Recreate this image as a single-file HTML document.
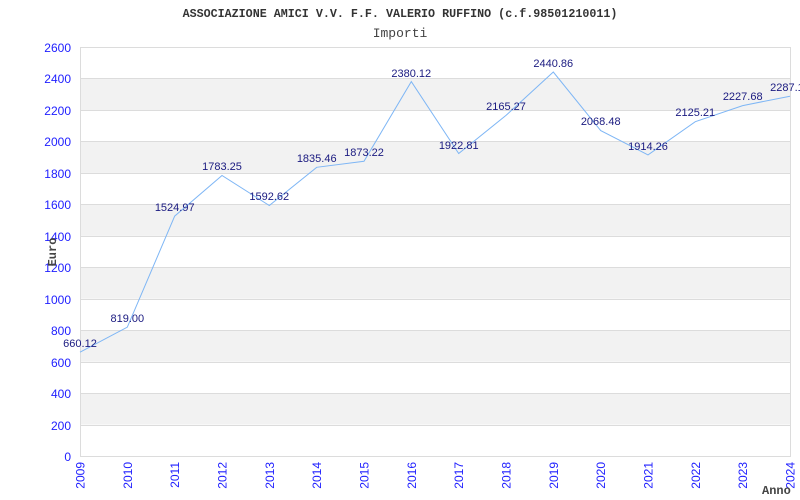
<!DOCTYPE html>
<html><head><meta charset="utf-8"><style>
html,body{margin:0;padding:0;background:#fff;}
svg{display:block}
</style></head><body>
<svg width="800" height="500" viewBox="0 0 800 500" xmlns="http://www.w3.org/2000/svg">
<rect width="800" height="500" fill="#fff"/>
<text x="400" y="17" text-anchor="middle" font-family="Liberation Mono, monospace" font-size="11.7" font-weight="bold" fill="#333">ASSOCIAZIONE AMICI V.V. F.F. VALERIO RUFFINO (c.f.98501210011)</text>
<text x="400" y="37" text-anchor="middle" font-family="Liberation Mono, monospace" font-size="13" fill="#444">Importi</text>
<g fill="#f2f2f2">
<rect x="80.5" y="393.1" width="710" height="31.5"/>
<rect x="80.5" y="330.2" width="710" height="31.5"/>
<rect x="80.5" y="267.2" width="710" height="31.5"/>
<rect x="80.5" y="204.3" width="710" height="31.5"/>
<rect x="80.5" y="141.4" width="710" height="31.5"/>
<rect x="80.5" y="78.5" width="710" height="31.5"/>
</g>
<g stroke="#dcdcdc" stroke-width="1">
<line x1="80" y1="47.5" x2="790" y2="47.5"/>
<line x1="80" y1="78.5" x2="790" y2="78.5"/>
<line x1="80" y1="110.5" x2="790" y2="110.5"/>
<line x1="80" y1="141.5" x2="790" y2="141.5"/>
<line x1="80" y1="173.5" x2="790" y2="173.5"/>
<line x1="80" y1="204.5" x2="790" y2="204.5"/>
<line x1="80" y1="236.5" x2="790" y2="236.5"/>
<line x1="80" y1="267.5" x2="790" y2="267.5"/>
<line x1="80" y1="299.5" x2="790" y2="299.5"/>
<line x1="80" y1="330.5" x2="790" y2="330.5"/>
<line x1="80" y1="362.5" x2="790" y2="362.5"/>
<line x1="80" y1="393.5" x2="790" y2="393.5"/>
<line x1="80" y1="425.5" x2="790" y2="425.5"/>
<line x1="80" y1="456.5" x2="790" y2="456.5"/>
<line x1="80.5" y1="47" x2="80.5" y2="457"/>
<line x1="790.5" y1="47" x2="790.5" y2="457"/>
</g>
<g font-family="Liberation Sans, sans-serif" font-size="12" fill="#2020ff" text-anchor="end">
<text x="71" y="52">2600</text><text x="71" y="83">2400</text><text x="71" y="115">2200</text>
<text x="71" y="146">2000</text><text x="71" y="178">1800</text><text x="71" y="209">1600</text>
<text x="71" y="241">1400</text><text x="71" y="272">1200</text><text x="71" y="304">1000</text>
<text x="71" y="335">800</text><text x="71" y="367">600</text><text x="71" y="398">400</text>
<text x="71" y="430">200</text><text x="71" y="461">0</text>
</g>
<g font-family="Liberation Sans, sans-serif" font-size="12" fill="#2020ff" text-anchor="end">
<text transform="translate(84.5,462) rotate(-90)">2009</text>
<text transform="translate(131.8,462) rotate(-90)">2010</text>
<text transform="translate(179.2,462) rotate(-90)">2011</text>
<text transform="translate(226.5,462) rotate(-90)">2012</text>
<text transform="translate(273.8,462) rotate(-90)">2013</text>
<text transform="translate(321.2,462) rotate(-90)">2014</text>
<text transform="translate(368.5,462) rotate(-90)">2015</text>
<text transform="translate(415.8,462) rotate(-90)">2016</text>
<text transform="translate(463.2,462) rotate(-90)">2017</text>
<text transform="translate(510.5,462) rotate(-90)">2018</text>
<text transform="translate(557.8,462) rotate(-90)">2019</text>
<text transform="translate(605.2,462) rotate(-90)">2020</text>
<text transform="translate(652.5,462) rotate(-90)">2021</text>
<text transform="translate(699.8,462) rotate(-90)">2022</text>
<text transform="translate(747.2,462) rotate(-90)">2023</text>
<text transform="translate(794.5,462) rotate(-90)">2024</text>
</g>
<text transform="translate(56,252) rotate(-90)" text-anchor="middle" font-family="Liberation Mono, monospace" font-size="12" font-weight="bold" fill="#444">Euro</text>
<text x="762" y="494" font-family="Liberation Mono, monospace" font-size="12" font-weight="bold" fill="#444">Anno</text>
<polyline fill="none" stroke="#7eb6f5" stroke-width="1" points="80,352.2 127.3,327.2 174.7,216.1 222,175.5 269.3,205.5 316.7,167.3 364,161.3 411.3,81.6 458.7,153.5 506,115.4 553.3,72 600.7,130.6 648,154.9 695.3,121.7 742.7,105.6 790,96.2"/>
<g font-family="Liberation Sans, sans-serif" font-size="11" fill="#1a1a80" text-anchor="middle">
<text x="80" y="347">660.12</text>
<text x="127.3" y="322">819.00</text>
<text x="174.7" y="211">1524.97</text>
<text x="222" y="170">1783.25</text>
<text x="269.3" y="200">1592.62</text>
<text x="316.7" y="162">1835.46</text>
<text x="364" y="156">1873.22</text>
<text x="411.3" y="77">2380.12</text>
<text x="458.7" y="149">1922.81</text>
<text x="506" y="110">2165.27</text>
<text x="553.3" y="67">2440.86</text>
<text x="600.7" y="125">2068.48</text>
<text x="648" y="150">1914.26</text>
<text x="695.3" y="116">2125.21</text>
<text x="742.7" y="100">2227.68</text>
<text x="790" y="91">2287.10</text>
</g>
</svg>
</body></html>
